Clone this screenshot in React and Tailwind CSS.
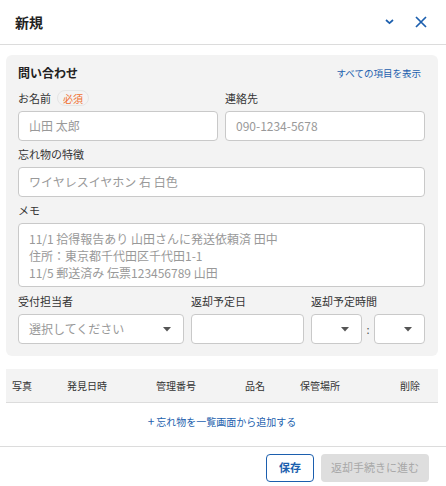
const font = { fontFamily: '"Noto Sans CJK JP", "Noto Sans", sans-serif' };

function Caret() {
  return (
    <svg width="8" height="5" viewBox="0 0 8 5" className="shrink-0">
      <path d="M0 0h8L4 4.5z" fill="#555" />
    </svg>
  );
}

function Field({ label, badge, children, className = "" }) {
  return (
    <div className={`flex flex-col ${className}`}>
      <div className="flex items-center gap-1.5 h-[20px] text-[11px] text-[#333] mb-[3px]">
        {label}
        {badge && (
          <span className="px-[5px] h-[16px] leading-[15px] rounded-full border border-[#e5e5e5] text-[10px] text-[#f07030]">
            {badge}
          </span>
        )}
      </div>
      {children}
    </div>
  );
}

function Input({ placeholder, className = "" }) {
  return (
    <div
      className={`h-[30px] rounded-[4px] border border-[#c9c9c9] bg-white px-[10px] flex items-center text-[12px] text-[#999] ${className}`}
    >
      {placeholder}
    </div>
  );
}

function Select({ placeholder, className = "" }) {
  return (
    <div
      className={`h-[30px] rounded-[4px] border border-[#c9c9c9] bg-white pl-[10px] pr-[12px] flex items-center justify-between text-[12px] text-[#999] ${className}`}
    >
      <span>{placeholder}</span>
      <Caret />
    </div>
  );
}

export default function App() {
  const cols = [
    ["写真", "w-[55px]"],
    ["発見日時", "w-[89px]"],
    ["管理番号", "w-[89px]"],
    ["品名", "w-[55px]"],
    ["保管場所", "w-[100px]"],
    ["削除", ""],
  ];

  return (
    <div className="w-[446px] h-[486px] bg-white flex flex-col" style={font}>
      <div className="h-[45px] shrink-0 flex items-center justify-between pl-[15px] pr-[19px] border-b border-[#dcdcdc]">
        <h1 className="text-[14px] font-bold text-[#222]">新規</h1>
        <div className="flex items-center gap-[21px]">
          <svg width="9" height="6" viewBox="0 0 9 6">
            <path d="M1 1l3.5 3.2L8 1" fill="none" stroke="#1c5fae" strokeWidth="1.7" />
          </svg>
          <svg width="12" height="12" viewBox="0 0 12 12">
            <path d="M1 1l10 10M11 1L1 11" fill="none" stroke="#1c5fae" strokeWidth="1.7" />
          </svg>
        </div>
      </div>

      <div className="flex-1 flex flex-col">
        <div className="ml-[6px] mr-[8px] mt-[10px] rounded-[6px] bg-[#f3f3f3] pl-[12px] pr-[13px] pt-[7px] pb-[12px]">
          <div className="flex items-center justify-between h-[22px] mb-[4px]">
            <h2 className="text-[12px] font-bold text-[#222]">問い合わせ</h2>
            <a className="text-[9.5px] text-[#1c5fae] pr-[4px]">すべての項目を表示</a>
          </div>

          <div className="grid grid-cols-2 gap-[7px]">
            <Field label="お名前" badge="必須">
              <Input placeholder="山田 太郎" />
            </Field>
            <Field label="連絡先">
              <Input placeholder="090-1234-5678" />
            </Field>
          </div>

          <Field label="忘れ物の特徴" className="mt-[3px]">
            <Input placeholder="ワイヤレスイヤホン 右 白色" />
          </Field>

          <Field label="メモ" className="mt-[3px]">
            <div className="h-[64px] rounded-[4px] border border-[#c9c9c9] bg-white px-[10px] py-[6px] text-[12px] leading-[17px] text-[#999]">
              <div>11/1 拾得報告あり 山田さんに発送依頼済 田中</div>
              <div>住所：東京都千代田区千代田1-1</div>
              <div>11/5 郵送済み 伝票123456789 山田</div>
            </div>
          </Field>

          <div className="flex gap-[7px] mt-[4px]">
            <Field label="受付担当者" className="w-[166px]">
              <Select placeholder="選択してください" />
            </Field>
            <Field label="返却予定日" className="w-[113px]">
              <Input />
            </Field>
            <Field label="返却予定時間" className="flex-1">
              <div className="flex items-center">
                <Select className="flex-1" />
                <span className="w-[12px] text-center text-[11px] text-[#555]">:</span>
                <Select className="flex-1" />
              </div>
            </Field>
          </div>
        </div>

        <div className="ml-[6px] mr-[8px] mt-[13px]">
          <div className="h-[34px] bg-[#f3f3f3] border-b border-[#dcdcdc] flex items-center px-[6px] text-[10px] text-[#333]">
            {cols.map(([name, w]) => (
              <div key={name} className={w}>
                {name}
              </div>
            ))}
          </div>
          <div className="h-[36px] flex items-center justify-center text-[10px] text-[#1c5fae]">
            <span className="text-[12px] mr-[2px] leading-none">+</span>忘れ物を一覧画面から追加する
          </div>
        </div>
      </div>

      <div className="h-[40px] shrink-0 border-t border-[#dcdcdc] flex items-center justify-end gap-[7px] pr-[17px] pt-[2px]">
        <button className="h-[28px] w-[48px] rounded-[4px] border border-[#1c5fae] bg-white text-[11px] font-bold text-[#1c5fae]">
          保存
        </button>
        <button className="h-[28px] w-[108px] rounded-[4px] bg-[#dedede] text-[11px] text-[#a8a8a8]" disabled>
          返却手続きに進む
        </button>
      </div>
    </div>
  );
}
